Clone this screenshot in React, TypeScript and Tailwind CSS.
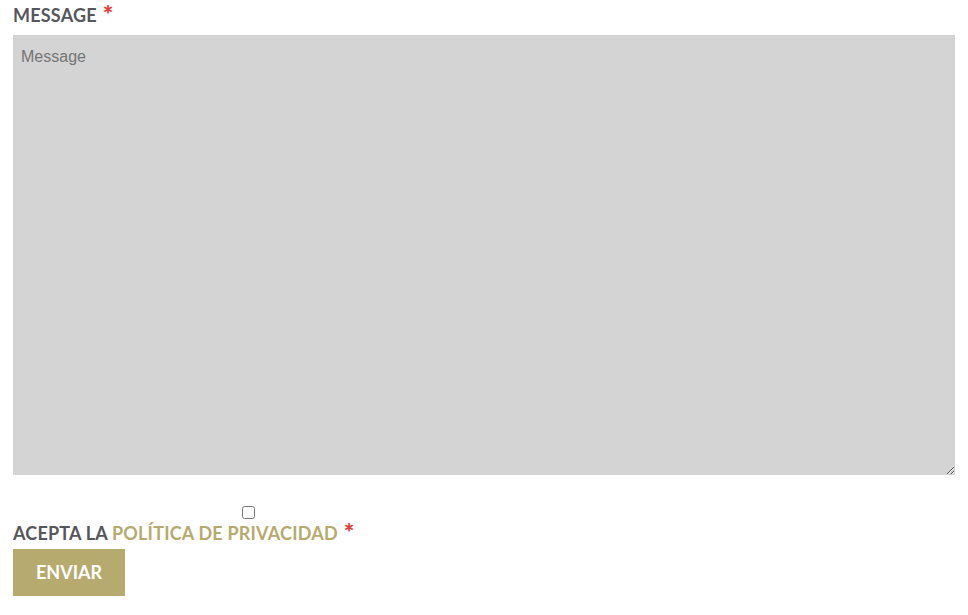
import React from "react";

const App: React.FC = () => {
  return (
    <div className="bg-white w-[968px] h-[615px] px-[13px] pt-[3px]" style={{ fontFamily: "Lato, 'Liberation Sans', sans-serif" }}>
      <label className="flex items-center gap-[6px] h-[24px] text-[18px] font-bold tracking-[0.2px] text-[#55575b] uppercase">
        <span>Message</span>
        <span className="self-start text-[#f03a3a] text-[25px] font-black leading-[22px]">*</span>
      </label>
      <textarea
        placeholder="Message"
        className="mt-[8px] block w-[942px] h-[440px] bg-[#d4d4d4] px-[8px] py-[10px] text-[16px] text-[#333] placeholder:text-[#757575] outline-none"
        style={{ fontFamily: "Arial, 'Liberation Sans', sans-serif" }}
      />
      <div className="mt-[30px]">
        <div className="pl-[229px] h-[14px] flex items-center">
          <input type="checkbox" className="w-[13px] h-[13px]" />
        </div>
        <label className="mt-[1px] flex items-center gap-[6px] h-[26px] text-[18px] font-bold tracking-[0.2px] uppercase text-[#55575b]">
          <span>
            Acepta la <span className="text-[#b7aa6e]">Política de privacidad</span>
          </span>
          <span className="self-start text-[#f03a3a] text-[25px] font-black leading-[24px]">*</span>
        </label>
      </div>
      <button className="mt-[3px] w-[112px] h-[47px] bg-[#b7aa6e] text-white text-[18px] font-bold uppercase">
        Enviar
      </button>
    </div>
  );
};

export default App;
